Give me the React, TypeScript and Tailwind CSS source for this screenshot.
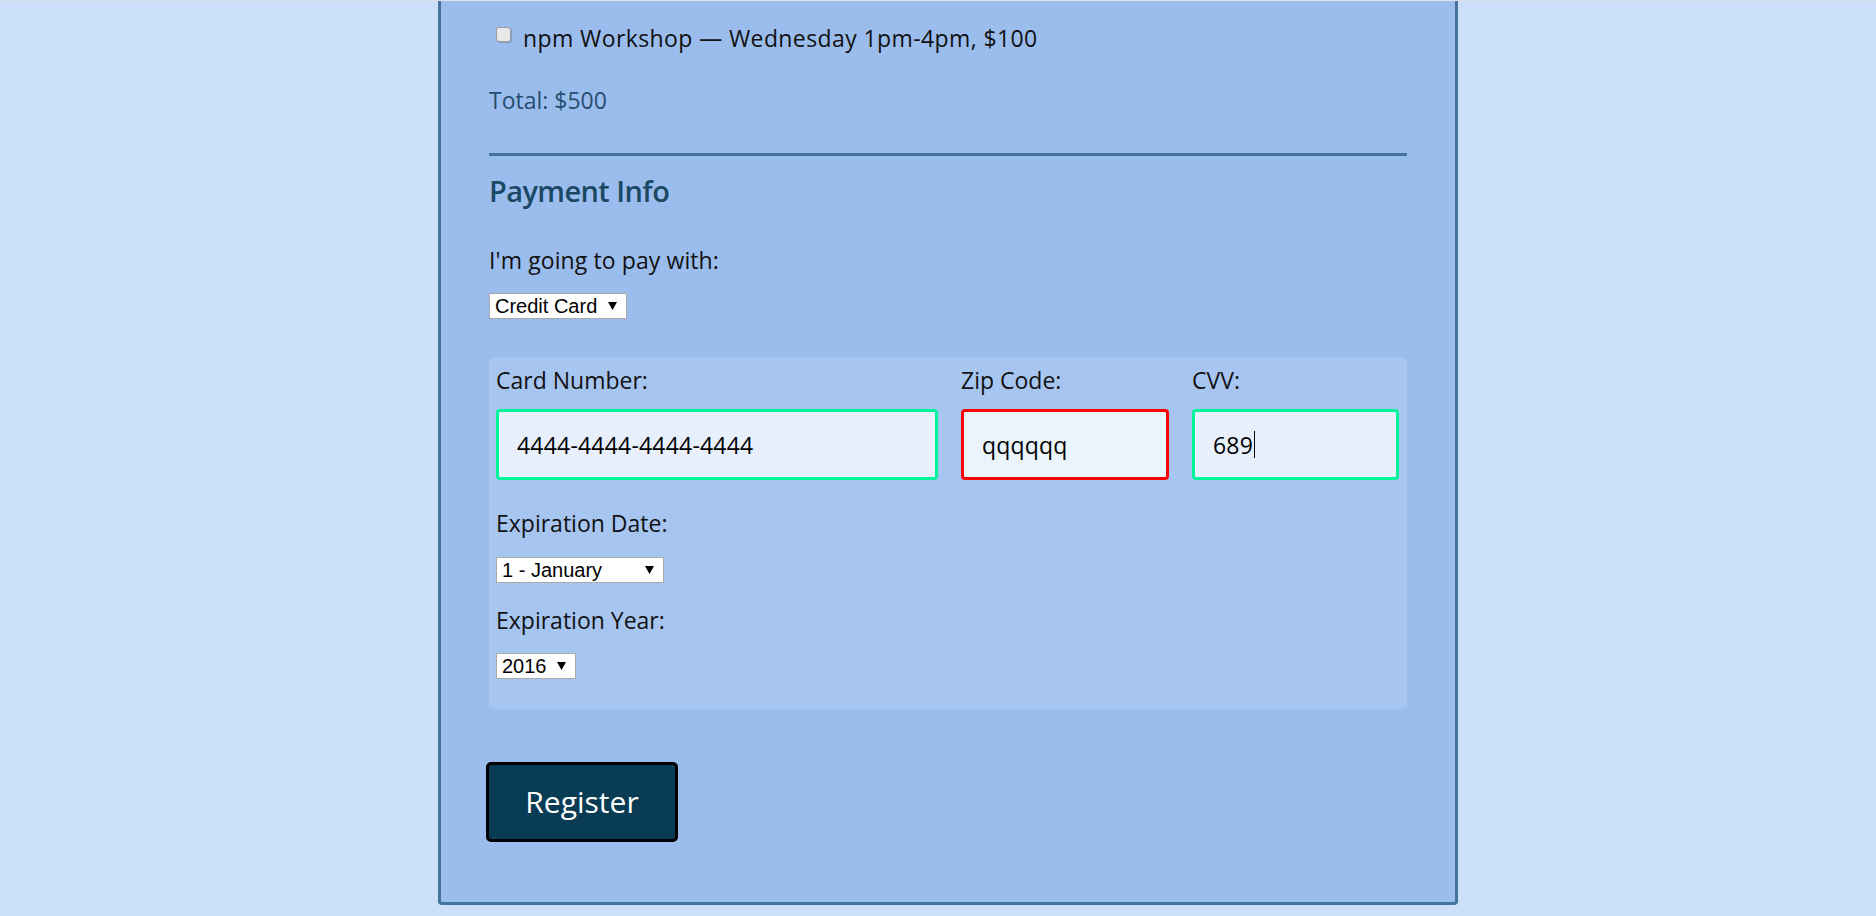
import React from "react";

function Arrow() {
  return (
    <svg width="9" height="8" viewBox="0 0 9 8" className="shrink-0">
      <path d="M0 0H9L4.5 8Z" fill="#000" />
    </svg>
  );
}

function FakeSelect({ text, className }: { text: string; className: string }) {
  return (
    <div
      className={
        "flex h-[26px] items-center justify-between border border-[#a9a9a9] bg-white pl-[5px] pr-[9px] font-['Liberation_Sans',Arial,sans-serif] text-[20px] leading-[23px] text-black " +
        className
      }
    >
      <span>{text}</span>
      <Arrow />
    </div>
  );
}

function Field({
  label,
  value,
  wrap,
  box,
  caret,
}: {
  label: string;
  value: string;
  wrap: string;
  box: string;
  caret?: boolean;
}) {
  return (
    <div className={"shrink-0 " + wrap}>
      <div className="text-[23px] leading-[30px] text-[#111]">{label}</div>
      <div
        className={
          "mt-[14px] flex h-[71px] items-center rounded-[4px] border-[3px] pl-[18px] text-[23px] leading-[30px] tracking-[0.2px] text-black " +
          box
        }
      >
        <span>{value}</span>
        {caret ? <span className="ml-px h-[27px] w-px bg-black" /> : null}
      </div>
    </div>
  );
}

export default function App() {
  return (
    <div className="min-h-screen bg-[#cde0fa] font-['Open_Sans','DejaVu_Sans',sans-serif] text-[#111]">
      <div className="h-px bg-[#dde3ea]" />
      <div className="ml-[438px] w-[1020px] rounded-b-[4px] border-x-[3px] border-b-[3px] border-[#44739b] bg-[#9bbdee] pl-[48px] pr-[48px] pt-[22px] pb-[60px]">
        <label className="flex h-[30px] items-start">
          <span className="ml-[7px] mt-[4px] h-[15px] w-[15px] shrink-0 rounded-[3px] border border-[#9c9c9c] bg-[#e8e8e8] shadow-[1px_1px_1px_rgba(0,0,0,0.18)]" />
          <span className="ml-[12px] text-[23px] leading-[30px] tracking-[0.4px] text-[#111]">
            npm Workshop — Wednesday 1pm-4pm, $100
          </span>
        </label>

        <p className="mt-[32px] text-[23px] leading-[30px] text-[#264e6e]">Total: $500</p>

        <div className="mt-[38px] h-[3px] bg-[#46739b]" />

        <h2 className="mt-[17px] text-[29px] font-semibold leading-[36px] tracking-[-0.6px] text-[#1b4964]">
          Payment Info
        </h2>

        <p className="mt-[36px] text-[23px] leading-[30px] tracking-[0.1px] text-[#111]">
          I'm going to pay with:
        </p>

        <FakeSelect text="Credit Card" className="mt-[18px] w-[138px]" />

        <div className="mt-[38px] rounded-[5px] bg-[#a6c6f1] pl-[7px] pr-[8px] pt-[8px] pb-[30px]">
          <div className="flex gap-[23px]">
            <Field
              label="Card Number:"
              value="4444-4444-4444-4444"
              wrap="w-[442px]"
              box="border-[#00f59b] bg-[#e8f0fd]"
            />
            <Field
              label="Zip Code:"
              value="qqqqqq"
              wrap="w-[208px]"
              box="border-[#ff0000] bg-[#eaf4fc]"
            />
            <Field
              label="CVV:"
              value="689"
              wrap="w-[207px]"
              box="border-[#00f59b] bg-[#e8f0fd]"
              caret
            />
          </div>

          <p className="mt-[28px] text-[23px] leading-[30px] text-[#111]">Expiration Date:</p>
          <FakeSelect text="1 - January" className="mt-[19px] w-[168px]" />

          <p className="mt-[22px] text-[23px] leading-[30px] text-[#111]">Expiration Year:</p>
          <FakeSelect text="2016" className="mt-[18px] w-[80px]" />
        </div>

        <button
          type="button"
          className="-ml-[3px] mt-[53px] flex h-[80px] w-[192px] items-center justify-center rounded-[5px] border-[3px] border-black bg-[#083c55] text-[30px] leading-[40px] text-white"
        >
          Register
        </button>
      </div>
    </div>
  );
}
